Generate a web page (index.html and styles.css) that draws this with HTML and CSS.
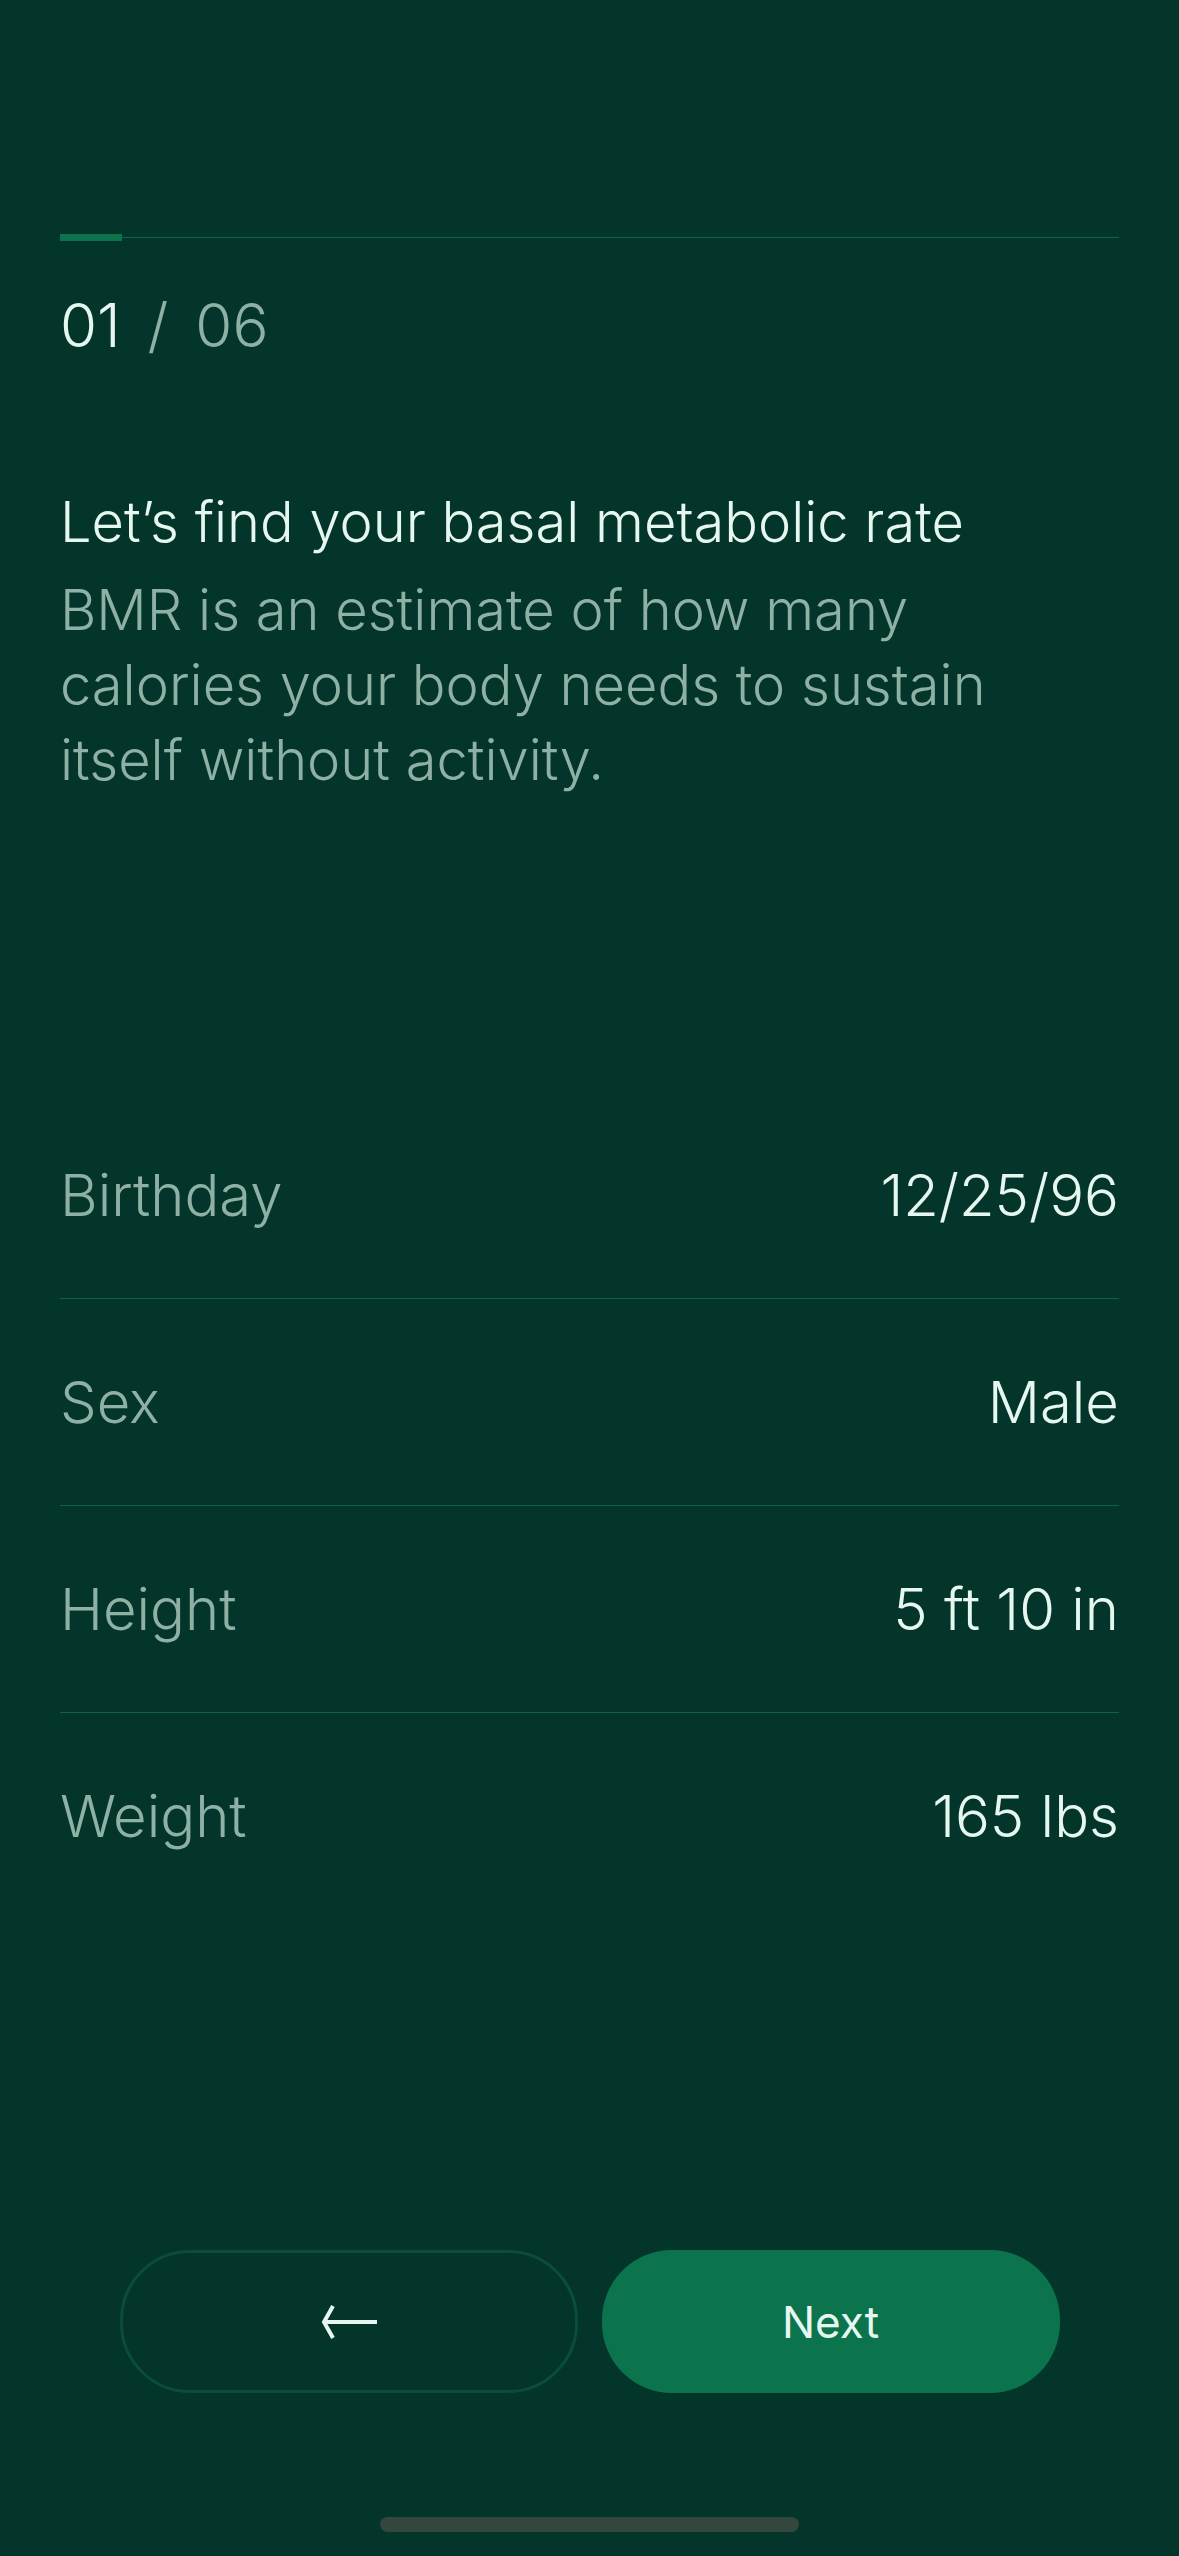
FILE: index.html
```html
<!DOCTYPE html>
<html lang="en">
<head>
<meta charset="utf-8">
<title>BMR</title>
<link rel="stylesheet" href="styles.css">
</head>
<body>
<main class="screen">
  <div class="progress">
    <div class="progress-fill"></div>
    <div class="progress-track"></div>
  </div>
  <div class="counter"><span class="current">01</span> <span class="total">/ 06</span></div>

  <h1 class="title">Let’s find your basal metabolic rate</h1>
  <p class="subtitle">BMR is an estimate of how many calories your body needs to sustain itself without activity.</p>

  <section class="rows">
    <div class="row"><span class="label">Birthday</span><span class="value">12/25/96</span></div>
    <div class="row"><span class="label">Sex</span><span class="value">Male</span></div>
    <div class="row"><span class="label">Height</span><span class="value">5 ft 10 in</span></div>
    <div class="row"><span class="label">Weight</span><span class="value">165 lbs</span></div>
  </section>

  <div class="actions">
    <button class="btn btn-back" aria-label="Back">
      <svg width="60" height="36" viewBox="0 0 60 36" fill="none" stroke="#e6f7f0" stroke-width="4" stroke-linecap="butt" stroke-linejoin="miter">
        <path d="M58 18H4"/>
        <path d="M14 2L5 18L14 34"/>
      </svg>
    </button>
    <button class="btn btn-next">Next</button>
  </div>

  <div class="home-indicator"></div>
</main>
</body>
</html>
```

FILE: styles.css
```css
* { box-sizing: border-box; }
html, body {
  margin: 0;
  padding: 0;
  background: #03352b;
}
body {
  font-family: Inter, "Noto Sans", sans-serif;
  font-weight: 300;
  color: #e6f7f0;
}
.screen {
  width: 1179px;
  height: 2556px;
  padding: 234px 60px 0 60px;
  display: flex;
  flex-direction: column;
}
.progress {
  display: flex;
  align-items: center;
  height: 7px;
}
.progress-fill {
  width: 62px;
  height: 7px;
  background: #0c744d;
}
.progress-track {
  flex: 1;
  height: 1px;
  background: #10624a;
}
.counter {
  margin-top: 48px;
  font-size: 60px;
  line-height: 72px;
  word-spacing: 10px;
}
.counter .current { color: #e6f7f0; }
.counter .total { color: #8fb1a5; }

.title {
  margin: 124px 0 0 0;
  font-size: 56px;
  font-weight: 300;
  line-height: 75px;
  color: #e6f7f0;
}
.subtitle {
  margin: 13px 0 0 0;
  font-size: 56px;
  line-height: 75px;
  color: #8fb1a5;
}
.rows {
  margin-top: 293px;
  display: flex;
  flex-direction: column;
}
.row {
  height: 207px;
  display: flex;
  align-items: center;
  justify-content: space-between;
  font-size: 58px;
  border-top: 1px solid #13604a;
}
.row:first-child { border-top: none; }
.label { color: #8fb1a5; }
.value { color: #e6f7f0; }

.actions {
  margin-top: 331px;
  display: flex;
  justify-content: center;
  gap: 24px;
}
.btn {
  width: 458px;
  height: 143px;
  border-radius: 70px;
  display: flex;
  align-items: center;
  justify-content: center;
  font-family: Inter, "Noto Sans", sans-serif;
  font-weight: 400;
  font-size: 44px;
  color: #e6f7f0;
  padding: 0;
}
.btn-back {
  background: transparent;
  border: 3px solid #0b4d39;
}
.btn-next {
  background: #0c744d;
  border: none;
}
.home-indicator {
  margin: auto auto 24px auto;
  width: 419px;
  height: 15px;
  border-radius: 8px;
  background: #34473f;
}
```
